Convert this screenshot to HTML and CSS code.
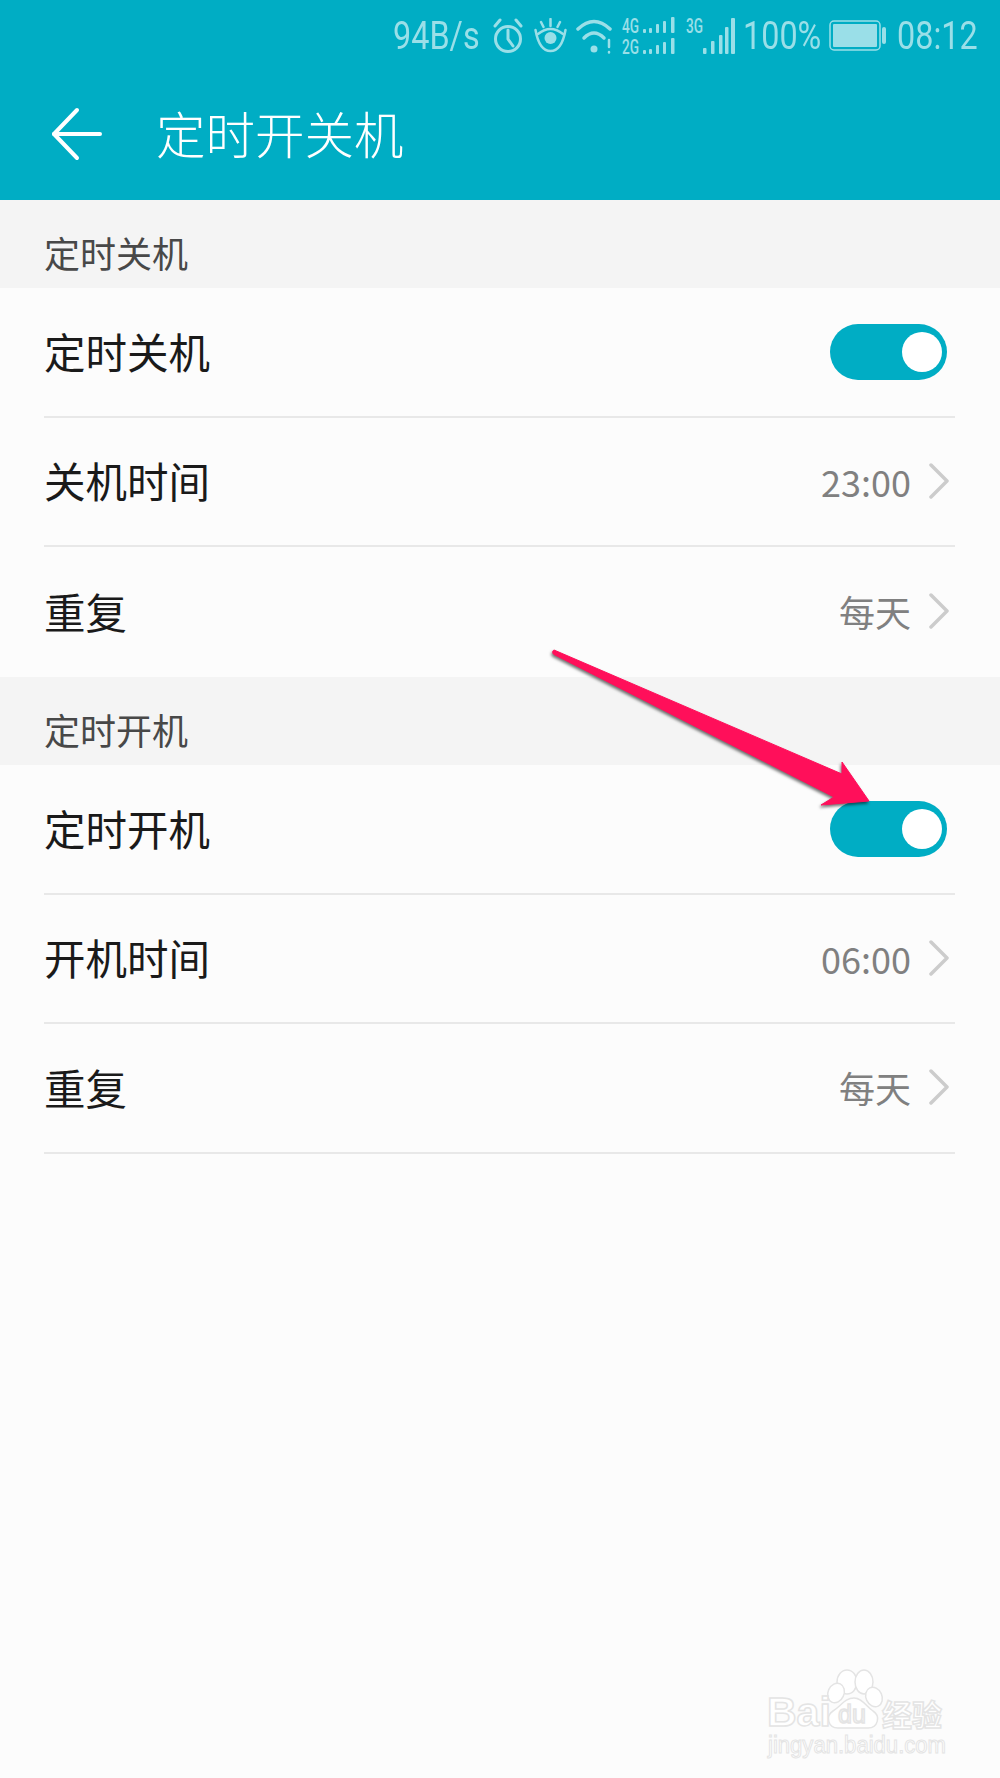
FILE: index.html
```html
<!DOCTYPE html>
<html lang="zh-CN">
<head>
    <meta charset="UTF-8">
    <meta name="viewport" content="width=device-width, initial-scale=1.0">
    <title>定时开关机</title>
    <link rel="stylesheet" href="styles.css">
</head>
<body>

    <header class="header">
        <div class="status">
            <span class="narrow speed"><span>94B/s</span></span>
            <!-- alarm -->
            <svg class="ic-clock" width="30" height="35" viewBox="0 0 30 35" fill="none" stroke="#9adfe8" stroke-width="3" stroke-linecap="round">
                <circle cx="15" cy="21" r="12.5"/>
                <path d="M15 12v9l5 7"/>
                <path d="M2 8l5-6M23 2l5 6"/>
            </svg>
            <!-- eye comfort -->
            <svg class="ic-eye" width="33" height="35" viewBox="0 0 33 35" fill="none" stroke="#9adfe8" stroke-width="2.500" stroke-linecap="round">
                <path d="M1.500 12C4 26 9 33 16.500 33S29 26 31.500 12"/>
                <path d="M4 16Q16.500 6 29 16"/>
                <path d="M16.500 1v7M7 4l2.500 5M26 4l-2.500 5"/>
                <circle cx="16.500" cy="20" r="6" fill="#9adfe8" stroke="none"/>
            </svg>
            <!-- wifi -->
            <svg class="ic-wifi" width="37" height="36" viewBox="0 0 37 36" fill="none" stroke="#9adfe8" stroke-width="3.500" stroke-linecap="round">
                <path d="M2 11Q18-4 34 11"/>
                <path d="M8 20Q18 10 28 20"/>
                <circle cx="18" cy="31" r="3.500" fill="#9adfe8" stroke="none"/>
                <path d="M33 22v7M33 34v.5" stroke-width="2.500"/>
            </svg>
            <!-- 4G + 2G -->
            <svg class="ic-sim" width="53" height="38" viewBox="0 0 53 38">
                <g fill="#9adfe8">
                    <text class="net" x="0" y="16" textLength="17" lengthAdjust="spacingAndGlyphs">4G</text>
                    <text class="net" x="0" y="37" textLength="17" lengthAdjust="spacingAndGlyphs">2G</text>
                    <rect x="21" y="12" width="3" height="4" rx="1"/>
                    <rect x="27" y="11" width="3" height="5" rx="1"/>
                    <rect x="34" y="7" width="3" height="9" rx="1"/>
                    <rect x="41" y="4" width="3" height="12" rx="1"/>
                    <rect x="49" y="0" width="3.500" height="16" rx="1"/>
                    <rect x="21" y="33" width="3" height="4" rx="1"/>
                    <rect x="27" y="32" width="3" height="5" rx="1"/>
                    <rect x="34" y="28" width="3" height="9" rx="1"/>
                    <rect x="41" y="25" width="3" height="12" rx="1"/>
                    <rect x="49" y="21" width="3.500" height="16" rx="1"/>
                </g>
            </svg>
            <!-- 3G -->
            <svg class="ic-3g" width="50" height="38" viewBox="0 0 50 38">
                <g fill="#9adfe8">
                    <text class="net" x="0" y="16" textLength="17" lengthAdjust="spacingAndGlyphs">3G</text>
                    <rect x="17" y="31" width="3.500" height="6" rx="1"/>
                    <rect x="25" y="24" width="3.500" height="13" rx="1"/>
                    <rect x="33" y="18" width="3.500" height="19" rx="1"/>
                    <rect x="39" y="10" width="3.500" height="27" rx="1"/>
                    <rect x="45" y="1" width="4" height="36" rx="1"/>
                </g>
            </svg>
            <span class="narrow percent"><span>100%</span></span>
            <!-- battery -->
            <svg class="ic-battery" width="57" height="31" viewBox="0 0 57 31">
                <rect x="1" y="1" width="50" height="29" rx="4" fill="none" stroke="#9adfe8" stroke-width="1.500"/>
                <rect x="4" y="4" width="44" height="23" rx="1" fill="#9adfe8"/>
                <rect x="53" y="7" width="4" height="17" rx="2" fill="#9adfe8"/>
            </svg>
            <span class="narrow clock"><span>08:12</span></span>
        </div>
        <div class="appbar">
            <svg class="back" width="54" height="54" viewBox="0 0 54 54" fill="none" stroke="#fff" stroke-width="4" stroke-linecap="round" stroke-linejoin="round">
                <path d="M27 3L4 27l23 24"/>
                <path d="M4 27h46"/>
            </svg>
            <h1>定时开关机</h1>
        </div>
    </header>

    <div class="group-title">定时关机</div>
    <div class="list">
        <div class="row">
            <span class="label">定时关机</span>
            <span class="switch"><span class="knob"></span></span>
        </div>
        <div class="row">
            <span class="label">关机时间</span>
            <span class="value">23:00</span>
            <svg class="chevron" width="20" height="36" viewBox="0 0 20 36" fill="none" stroke="#ccc" stroke-width="3.500" stroke-linecap="round" stroke-linejoin="round"><path d="M2 2l16 16L2 34"/></svg>
        </div>
        <div class="row last">
            <span class="label">重复</span>
            <span class="value">每天</span>
            <svg class="chevron" width="20" height="36" viewBox="0 0 20 36" fill="none" stroke="#ccc" stroke-width="3.500" stroke-linecap="round" stroke-linejoin="round"><path d="M2 2l16 16L2 34"/></svg>
        </div>
    </div>

    <div class="group-title">定时开机</div>
    <div class="list">
        <div class="row">
            <span class="label">定时开机</span>
            <span class="switch"><span class="knob"></span></span>
        </div>
        <div class="row">
            <span class="label">开机时间</span>
            <span class="value">06:00</span>
            <svg class="chevron" width="20" height="36" viewBox="0 0 20 36" fill="none" stroke="#ccc" stroke-width="3.500" stroke-linecap="round" stroke-linejoin="round"><path d="M2 2l16 16L2 34"/></svg>
        </div>
        <div class="row tall">
            <span class="label">重复</span>
            <span class="value">每天</span>
            <svg class="chevron" width="20" height="36" viewBox="0 0 20 36" fill="none" stroke="#ccc" stroke-width="3.500" stroke-linecap="round" stroke-linejoin="round"><path d="M2 2l16 16L2 34"/></svg>
        </div>
    </div>

    <!-- annotation arrow drawn over the screenshot -->
    <svg class="arrow" width="340" height="170" viewBox="0 0 340 170">
        <path d="M4 3C2 4 2 7 5 8L284 150L271 158L319 154L292 115L292 127Z" fill="#ff0f5a" stroke="#ff0f5a" stroke-linejoin="round"/>
    </svg>

    <!-- watermark -->
    <svg class="watermark" width="240" height="110" viewBox="0 0 240 110">
        <g fill="#fff" stroke="#e4e4e4" stroke-width="1.500">
            <ellipse cx="107" cy="32" rx="10" ry="12"/>
            <ellipse cx="124" cy="32" rx="9" ry="12"/>
            <ellipse cx="134" cy="47" rx="8" ry="10" transform="rotate(-25 134 47)"/>
            <ellipse cx="96" cy="43" rx="8" ry="10" transform="rotate(25 96 43)"/>
            <path d="M114 48c8 0 12 8 19 13 8 5 5 17-5 17h-30c-10 0-13-12-5-17 8-5 12-13 21-13z"/>
            <text class="wm-bai" x="27" y="76">Bai</text>
            <text class="wm-du" x="98" y="73">du</text>
            <text class="wm-jy" x="142" y="76">经验</text>
            <text class="wm-url" x="28" y="103" textLength="178" lengthAdjust="spacingAndGlyphs">jingyan.baidu.com</text>
        </g>
    </svg>

</body>
</html>
```

FILE: styles.css
```css
body {
    margin: 0;
    height: 1778px;
    position: relative;
    overflow: hidden;
    background-color: #fcfcfc;
    font-family: "Noto Sans CJK SC", "Noto Sans", sans-serif;
}
.header {
    height: 200px;
    background-color: #00adc4;
}
.status {
    height: 60px;
    padding: 11px 23px 0 0;
    box-sizing: border-box;
    display: flex;
    justify-content: flex-end;
    align-items: center;
    color: #9adfe8;
    font-family: "Roboto", sans-serif;
    font-size: 39px;
}
/* no narrow font installed, so the status texts are squeezed */
.narrow {
    flex: none;
    line-height: 40px;
    white-space: nowrap;
}
.narrow span {
    display: inline-block;
    transform: scaleX(0.83);
    transform-origin: left center;
}
.speed { width: 87px; }
.percent { width: 77px; margin-left: 7px; }
.clock { width: 80px; margin-left: 11px; }
.ic-clock { margin-left: 13px; }
.ic-eye { margin-left: 11px; }
.ic-wifi { margin-left: 9px; }
.ic-sim { margin-left: 9px; overflow: visible; }
.ic-3g { margin-left: 11px; overflow: visible; }
.ic-battery { margin-left: 9px; }
.net {
    font-family: "Roboto", sans-serif;
    font-size: 20px;
    font-weight: 500;
}
.appbar {
    height: 140px;
    padding-left: 50px;
    display: flex;
    align-items: center;
}
.appbar .back {
    flex: none;
    margin-top: 8px;
}
.appbar h1 {
    margin: 6px 0 0 52px;
    font-size: 49.5px;
    font-weight: 300;
    line-height: 60px;
    color: #fff;
}
.group-title {
    height: 88px;
    padding: 29px 0 0 44px;
    box-sizing: border-box;
    background-color: #f4f4f4;
    color: #484848;
    font-size: 36px;
    line-height: 46px;
}
.list {
    padding-top: 1px;
}
.list .last {
    border-bottom: none;
    height: 130px;
}
.list .tall {
    height: 130px;
}
.row {
    height: 129px;
    margin: 0 45px 0 44px;
    padding-right: 6px;
    box-sizing: border-box;
    display: flex;
    align-items: center;
    border-bottom: 2px solid #e8e8e8;
}
.label {
    flex: 1;
    font-size: 41.5px;
    line-height: 50px;
    color: #1a1a1a;
    margin-top: -3px;
}
.value {
    font-family: "Noto Sans CJK SC", "Roboto", sans-serif;
    font-size: 36px;
    color: #808080;
    margin: -2px 18px 0 0;
}
.chevron {
    flex: none;
    margin-top: -2px;
}
.switch {
    width: 117px;
    height: 56px;
    margin: -2px 2px 0 0;
    padding-right: 5px;
    box-sizing: border-box;
    display: flex;
    justify-content: flex-end;
    align-items: center;
    background-color: #00adc4;
    border-radius: 28px;
}
.knob {
    width: 40px;
    height: 40px;
    border-radius: 50%;
    background-color: #fff;
}
.arrow {
    position: absolute;
    left: 550px;
    top: 647px;
    overflow: visible;
    filter: drop-shadow(-1px 2px 1.500px rgba(0, 0, 0, 0.55));
}
.watermark {
    position: absolute;
    left: 740px;
    top: 1650px;
}
.wm-bai {
    font-family: "Liberation Sans", sans-serif;
    font-size: 41px;
    font-weight: 700;
}
.wm-du {
    font-family: "Liberation Sans", sans-serif;
    font-size: 25px;
    fill: #fafafa;
}
.wm-jy {
    font-family: "Noto Sans CJK SC", sans-serif;
    font-size: 30px;
    font-weight: 700;
}
.wm-url {
    font-family: "Liberation Sans", sans-serif;
    font-size: 23px;
    stroke-width: 1;
}
```
